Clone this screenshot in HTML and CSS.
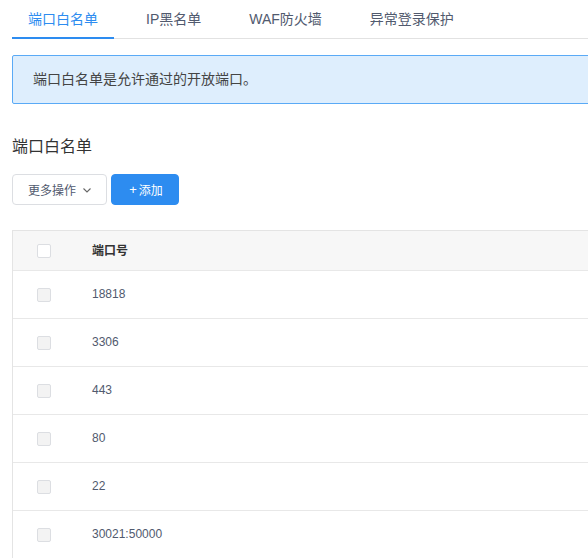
FILE: index.html
```html
<!DOCTYPE html>
<html lang="zh-CN">
<head>
<meta charset="utf-8">
<title>端口白名单</title>
<link rel="stylesheet" href="styles.css">
</head>
<body>
<div class="page">
  <nav class="tabs">
    <div class="tab active">端口白名单</div>
    <div class="tab">IP黑名单</div>
    <div class="tab">WAF防火墙</div>
    <div class="tab">异常登录保护</div>
  </nav>
  <div class="content">
    <div class="alert">端口白名单是允许通过的开放端口。</div>
    <h2 class="title">端口白名单</h2>
    <div class="toolbar">
      <button class="btn btn-default">更多操作
        <svg class="chev" width="8" height="5" viewBox="0 0 8 5"><path d="M0.5 0.5 L4 4 L7.5 0.5" fill="none" stroke="#666" stroke-width="1.1"/></svg>
      </button>
      <button class="btn btn-primary"><span class="plus">+</span>添加</button>
    </div>
    <div class="table">
      <div class="row head">
        <div class="cell check"><span class="cb"></span></div>
        <div class="cell">端口号</div>
      </div>
      <div class="row"><div class="cell check"><span class="cb disabled"></span></div><div class="cell">18818</div></div>
      <div class="row"><div class="cell check"><span class="cb disabled"></span></div><div class="cell">3306</div></div>
      <div class="row"><div class="cell check"><span class="cb disabled"></span></div><div class="cell">443</div></div>
      <div class="row"><div class="cell check"><span class="cb disabled"></span></div><div class="cell">80</div></div>
      <div class="row"><div class="cell check"><span class="cb disabled"></span></div><div class="cell">22</div></div>
      <div class="row"><div class="cell check"><span class="cb disabled"></span></div><div class="cell">30021:50000</div></div>
    </div>
  </div>
</div>
</body>
</html>
```
FILE: styles.css
```css
html, body {
  margin: 0;
  padding: 0;
  overflow: hidden;
  background: #fff;
}
body {
  font-family: "Liberation Sans", "Noto Sans CJK SC", sans-serif;
  color: #515a6e;
}
.page {
  width: 660px;
  padding-left: 12px;
}
.tabs {
  display: flex;
  height: 39px;
  box-sizing: border-box;
  border-bottom: 1px solid #e2e2e2;
}
.tab {
  height: 39px;
  box-sizing: border-box;
  padding: 0 16px;
  margin-right: 16px;
  margin-bottom: -1px;
  font-size: 14px;
  line-height: 39px;
  color: #515a6e;
  border-bottom: 2px solid transparent;
  white-space: nowrap;
}
.tab.active {
  color: #2d8cf0;
  border-bottom-color: #2d8cf0;
}
.content {
  padding-top: 16px;
}
.alert {
  height: 49px;
  box-sizing: border-box;
  border: 1px solid #5aaaf6;
  border-radius: 2px;
  background: #deeefd;
  padding-left: 20px;
  font-size: 14px;
  line-height: 47px;
  color: #444;
}
.title {
  margin: 31px 0 0;
  font-size: 16px;
  font-weight: normal;
  line-height: 24px;
  color: #333;
}
.toolbar {
  display: flex;
  gap: 4px;
  margin-top: 15px;
}
.btn {
  height: 31px;
  box-sizing: border-box;
  border-radius: 4px;
  font-family: inherit;
  font-size: 12px;
  display: flex;
  align-items: center;
  justify-content: center;
  padding: 0;
  cursor: pointer;
}
.btn-default {
  width: 95px;
  background: #fff;
  border: 1px solid #dcdee2;
  color: #515a6e;
  gap: 7px;
}
.chev {
  margin-top: 1px;
}
.btn-primary {
  width: 68px;
  background: #2d8cf0;
  border: 1px solid #2d8cf0;
  color: #fff;
}
.plus {
  font-size: 13px;
  margin-right: 2px;
  margin-left: 2px;
  font-weight: 300;
}
.table {
  margin-top: 25px;
  border-top: 1px solid #e4e4e4;
  border-left: 1px solid #e4e4e4;
}
.row {
  display: grid;
  grid-template-columns: 62px 1fr;
  height: 48px;
  box-sizing: border-box;
  border-bottom: 1px solid #e8e8e8;
  padding-bottom: 2px;
  align-items: center;
  font-size: 12px;
  color: #515a6e;
}
.row.head {
  height: 40px;
  background: #f7f7f7;
  font-weight: bold;
  color: #333;
}
.cell {
  padding-left: 17px;
  white-space: nowrap;
}
.cell.check {
  padding-left: 24px;
  padding-top: 2px;
  display: flex;
  align-items: center;
}
.cb {
  display: block;
  width: 14px;
  height: 14px;
  box-sizing: border-box;
  border: 1px solid #dcdee2;
  border-radius: 2px;
  background: #fff;
}
.cb.disabled {
  background: #f3f3f3;
}
```
